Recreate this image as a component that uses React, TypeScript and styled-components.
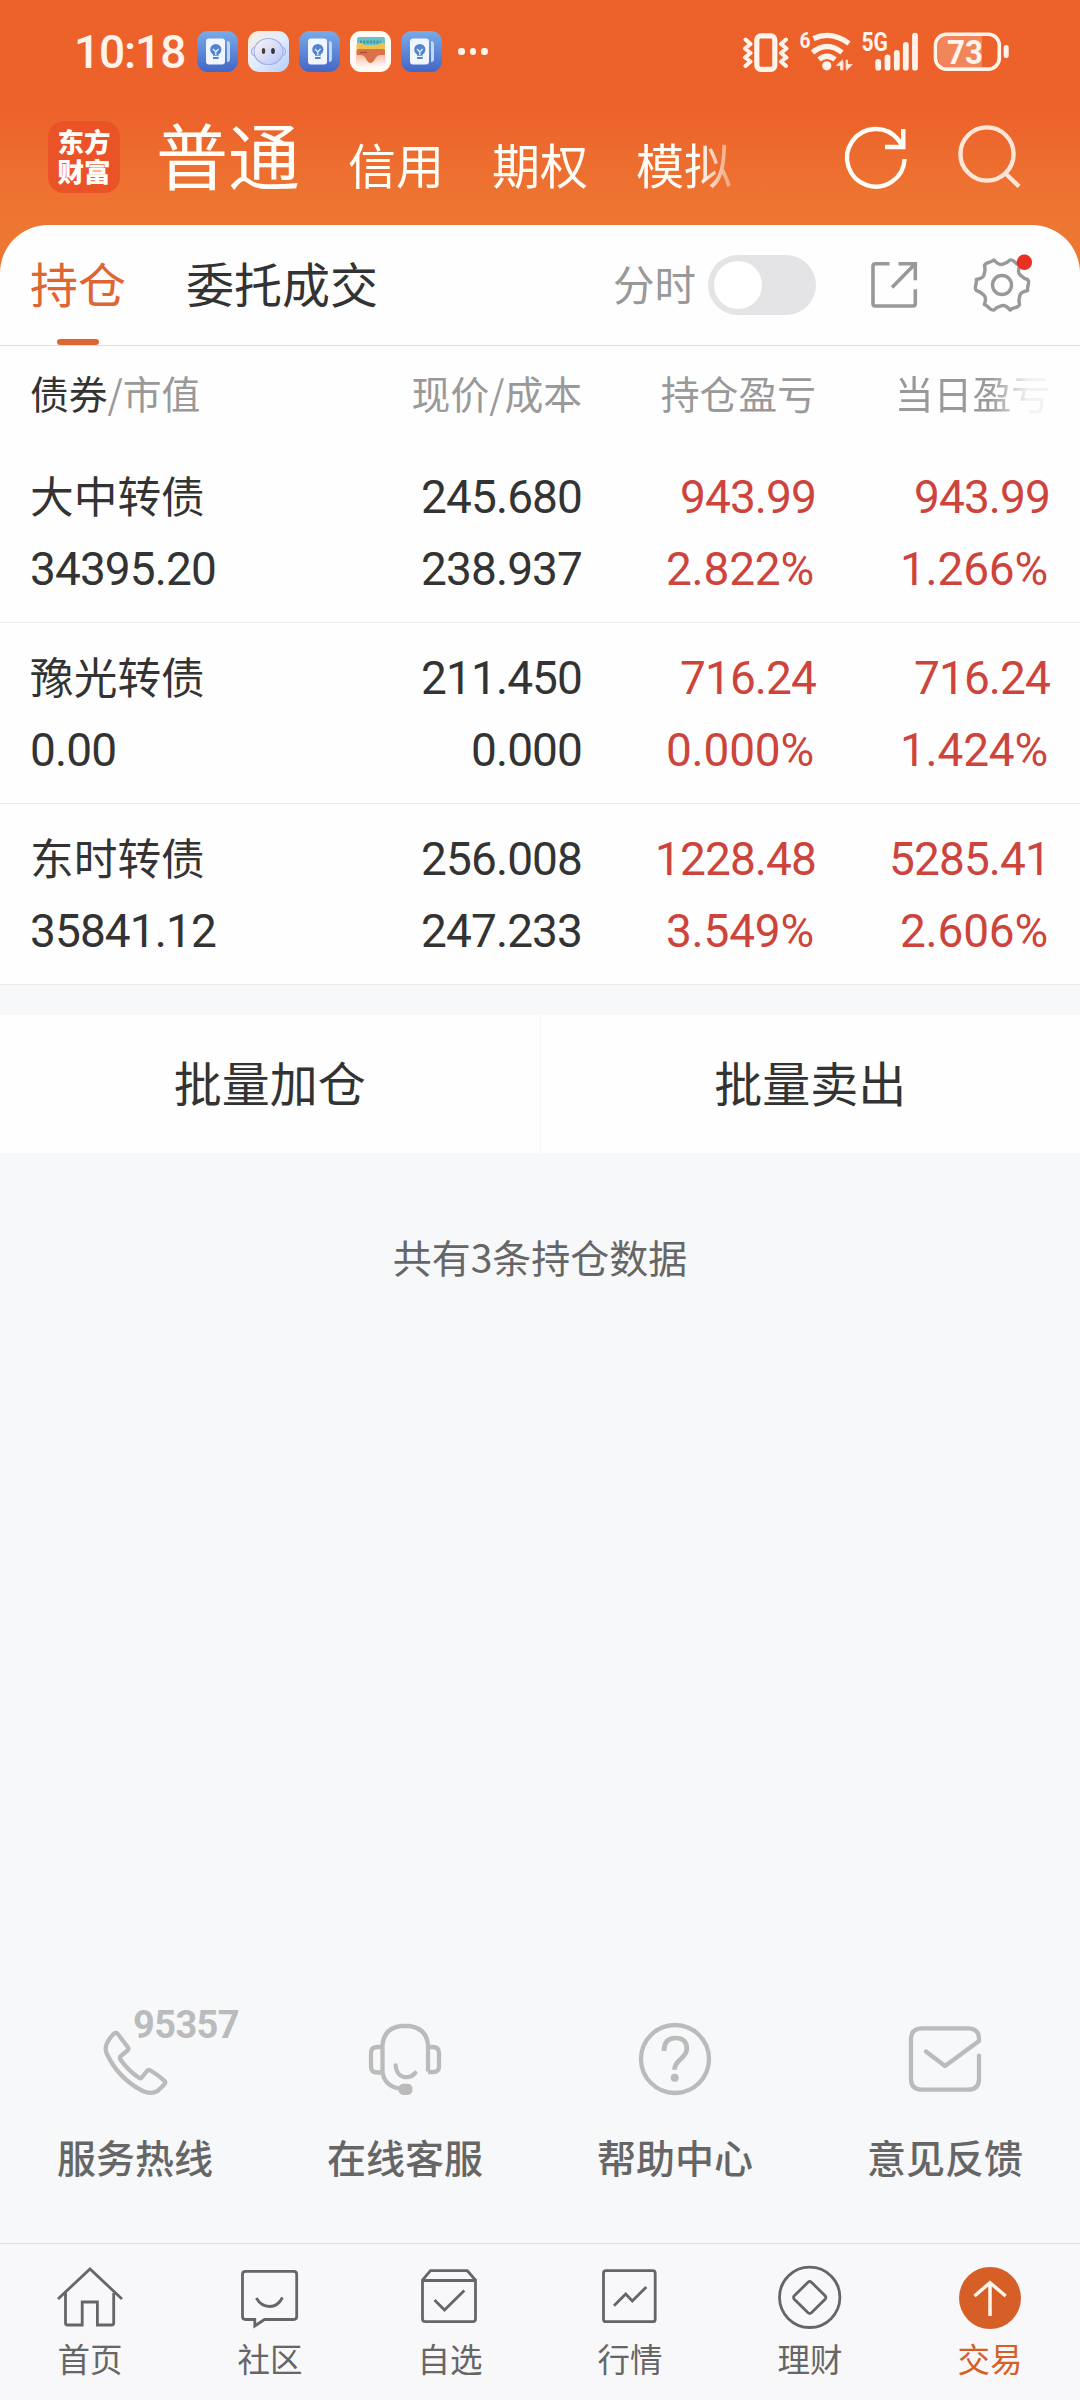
import React from 'react';
import styled, { createGlobalStyle, css } from 'styled-components';

const cjk = `"Noto Sans CJK SC", "Noto Sans", sans-serif`;
const digits = `Roboto, "Noto Sans CJK SC", sans-serif`;

const Global = createGlobalStyle`
  * { box-sizing: border-box; }
  body { margin: 0; background: #f7f8fa; font-family: ${cjk}; }
`;

const Page = styled.div`
  width: 1080px;
  height: 2400px;
  display: flex;
  flex-direction: column;
  background: #f7f8fa;
  color: #333;
  overflow: hidden;
  white-space: nowrap;
`;

const Header = styled.header`
  height: 273px;
  margin-bottom: -48px;
  flex: none;
  background: linear-gradient(#ed622b 0, #ec612a 108px, #ed6f30 170px, #ee7633 225px);
  color: #fffdf8;
`;

const StatusBar = styled.div`
  height: 103px;
  padding: 0 70px 0 74px;
  display: flex;
  align-items: center;
  color: #fff3ec;
`;

const Clock = styled.span`
  width: 123px;
  font: 500 46px/46px ${digits};
  letter-spacing: -1.1px;
`;

const AppIcons = styled.div`
  display: flex;
  gap: 10px;
  svg { display: block; }
`;

const Dots = styled.div`
  display: flex;
  gap: 5px;
  margin-left: 16px;
  i { width: 6.5px; height: 6.5px; border-radius: 50%; background: currentColor; }
`;

const StatusRight = styled.div`
  margin-left: auto;
  display: flex;
  svg { display: block; }
`;

const TitleBar = styled.div`
  height: 122px;
  padding: 0 56px 0 48px;
  display: flex;
`;

const Logo = styled.div`
  width: 72px;
  height: 72px;
  margin-top: 18px;
  padding-top: 5px;
  border-radius: 16px;
  background: #ea5228;
  text-align: center;
  font: 800 26.5px/30px ${cjk};
`;

const Accounts = styled.nav`
  display: flex;
  align-items: baseline;
  gap: 48px;
  margin-left: 36px;
  height: 112px;
  padding-top: 1px;
  mask-image: linear-gradient(90deg, #000 542px, rgba(0, 0, 0, 0.35) 576px);
`;

const Account = styled.span<{ $active?: boolean }>`
  font-size: ${(p) => (p.$active ? 72 : 48)}px;
  line-height: 98px;
`;

const HeaderIcons = styled.div`
  margin-left: auto;
  display: flex;
  gap: 40px;
  padding-top: 19px;
`;

const Card = styled.section`
  background: #fefefe;
  border-radius: 48px 48px 0 0;
  flex: none;
`;

const Tabs = styled.div`
  height: 121px;
  padding: 0 46px 0 30px;
  border-bottom: 1px solid #dedede;
  display: flex;
`;

const Tab = styled.div<{ $active?: boolean }>`
  height: 120px;
  margin-right: 60px;
  font-size: 48px;
  line-height: 114px;
  display: flex;
  flex-direction: column;
  align-items: center;
  ${(p) => p.$active && css`
    color: #dd6633;
    &::after {
      content: '';
      flex: none;
      width: 42px;
      height: 6px;
      border-radius: 3px;
      background: #dd6633;
    }
  `}
`;

const Tools = styled.div`
  margin-left: auto;
  height: 120px;
  display: flex;
  align-items: center;
`;

const ToolLabel = styled.span`
  font-size: 41.5px;
  line-height: 60px;
  padding-bottom: 5px;
  color: #999;
`;

const Toggle = styled.div`
  width: 108px;
  height: 60px;
  margin: 0 52px 0 12px;
  padding: 6px;
  border-radius: 30px;
  background: #e4e4e6;
  &::before {
    content: '';
    display: block;
    width: 48px;
    height: 48px;
    border-radius: 50%;
    background: #fff;
  }
`;

const SettingsWrap = styled.span`
  display: flex;
  margin-left: 50px;
`;

const GridRow = styled.div`
  display: grid;
  grid-template-columns: 252px 300px 234px 234px;
  padding: 0 30px;
`;

const HeadRow = styled(GridRow)`
  height: 96px;
  font-size: 38.8px;
  line-height: 92px;
  color: #999;
  b { font-weight: 400; color: #333; }
`;

const HeadCell = styled.span<{ $fade?: boolean }>`
  text-align: right;
  &:first-child { text-align: left; }
  ${(p) => p.$fade && css`
    mask-image: linear-gradient(90deg, #000 174px, rgba(0, 0, 0, 0.12) 212px);
  `}
`;

const HoldingRow = styled(GridRow)`
  height: 181px;
  padding-top: 19px;
  border-bottom: 1px solid #ebebeb;
`;

const Cell = styled.div<{ $up?: boolean }>`
  display: flex;
  flex-direction: column;
  align-items: flex-end;
  font: 400 46px/72px ${digits};
  letter-spacing: -0.9px;
  color: ${(p) => (p.$up ? '#cd443c' : '#333')};
  &:first-child { align-items: flex-start; }
`;

const Percent = styled.span`
  letter-spacing: -0.2px;
  padding-right: 2px;
`;

const BondName = styled.span`
  font: 400 43.7px/66px ${cjk};
  letter-spacing: 0;
  margin-bottom: 6px;
`;

const Actions = styled.div`
  margin-top: 30px;
  display: flex;
  background: #fefefe;
  flex: none;
`;

const Action = styled.button`
  flex: 1;
  height: 138px;
  border: 0;
  padding: 0 0 6px;
  background: none;
  font: 400 48px/132px ${cjk};
  color: #333;
  & + & { border-left: 1px solid #f5f5f6; }
`;

const Summary = styled.p`
  margin: 0;
  text-align: center;
  font-size: 39px;
  line-height: 206px;
  color: #666;
`;

const Services = styled.div`
  margin-top: auto;
  display: grid;
  grid-template-columns: repeat(4, 1fr);
  padding-bottom: 62px;
`;

const Service = styled.div`
  position: relative;
  display: flex;
  flex-direction: column;
  align-items: center;
  font-weight: 500;
  font-size: 39px;
  line-height: 50px;
  color: #666;
  svg { display: block; margin-bottom: 31px; }
`;

const HotlineBadge = styled.span`
  position: absolute;
  left: 133px;
  top: -5px;
  font: 700 38px/40px ${digits};
  letter-spacing: -0.6px;
  color: #bbb;
`;

const BottomNav = styled.nav`
  height: 157px;
  flex: none;
  border-top: 1px solid #e1e1e4;
  background: #f8f8fa;
  display: grid;
  grid-template-columns: repeat(6, 1fr);
  padding-top: 20px;
`;

const NavItem = styled.div<{ $active?: boolean }>`
  display: flex;
  flex-direction: column;
  align-items: center;
  font-size: 32.5px;
  line-height: 40px;
  color: ${(p) => (p.$active ? '#d65f27' : '#666')};
  svg { display: block; margin-bottom: 8px; }
`;

const NoteApp = () => (
  <svg width="41" height="41" viewBox="0 0 41 41">
    <defs>
      <linearGradient id="note" x2="0" y2="1"><stop stopColor="#79abea" /><stop offset="1" stopColor="#4366c6" /></linearGradient>
    </defs>
    <rect width="41" height="41" rx="11" fill="url(#note)" />
    <path d="M30 10q3 0 3 3v15q0 3-3 3z" fill="#c3d6f6" />
    <rect x="9" y="7.500" width="19" height="26" rx="3" fill="#f1f6fe" />
    <circle cx="18.800" cy="18.500" r="5.600" fill="#5583d0" />
    <path d="M16 22h5.600v6h-5.600z" fill="#5583d0" />
    <path d="M16 18l2.800 2.800 2.800-2.800M18.800 21v3M16 25.300h5.600" stroke="#f1f6fe" strokeWidth="1.200" fill="none" />
  </svg>
);

const FaceApp = () => (
  <svg width="41" height="41" viewBox="0 0 41 41">
    <defs>
      <linearGradient id="faceBg" x2="1" y2="1"><stop stopColor="#fdeedd" /><stop offset=".5" stopColor="#e0edfb" /><stop offset="1" stopColor="#b5cdfb" /></linearGradient>
      <linearGradient id="face" x2="1" y2="1"><stop stopColor="#fbf6f3" /><stop offset="1" stopColor="#b6c6fb" /></linearGradient>
    </defs>
    <rect width="41" height="41" rx="11" fill="url(#faceBg)" />
    <path d="M7 16q-3.500 1-3.500 4.500T7 25M34 16q3.500 1 3.500 4.500T34 25" fill="none" stroke="#a6b1ea" strokeWidth="1.200" />
    <ellipse cx="20.500" cy="20.500" rx="14.500" ry="13" fill="url(#face)" stroke="#a3b0e8" strokeWidth="1.200" />
    <ellipse cx="15.500" cy="20" rx="1.700" ry="3" fill="#4b3d3a" />
    <ellipse cx="25" cy="20" rx="1.900" ry="3" fill="#353443" />
  </svg>
);

const WalletApp = () => (
  <svg width="41" height="41" viewBox="0 0 41 41">
    <defs>
      <linearGradient id="wallet" x2="0" y2="1"><stop stopColor="#f6bda9" /><stop offset="1" stopColor="#fffaf6" /></linearGradient>
    </defs>
    <rect width="41" height="41" rx="11" fill="#fffaf5" />
    <rect x="7" y="6" width="28" height="14" rx="2" fill="#6cc0c6" />
    <path d="M10 11h21" stroke="#3f979f" strokeWidth="3" strokeDasharray="2 1.300" />
    <path d="M6.500 14q0-2 2-2h3q2 2 4 2h11q2 0 4-2h2q2.500 0 2.500 2v8h-28.500z" fill="#f0c04f" />
    <path d="M6.500 20q0-2 2-2h24.500q2 0 2 2v14h-28.500z" fill="#dc7048" />
    <path d="M10 21.500h7" stroke="#a94a33" strokeWidth="1.200" />
    <path d="M6 24h5q3 0 5 4 4.500 8 9 0 2-4 5-4h5.500v10q0 2-2 2h-25.500q-2 0-2-2z" fill="url(#wallet)" />
  </svg>
);

/* Vibrate, Wi-Fi 6, 5G signal and battery, drawn on one 270x72 strip. */
const StatusIcons = () => (
  <svg width="270" height="72" viewBox="740 15 270 72" fill="none" stroke="#fff3ec" strokeLinecap="round" strokeLinejoin="round">
    <rect x="756.800" y="34.800" width="18" height="33.500" rx="4" strokeWidth="5.200" />
    <path d="M745.500 38.500l5 4.500-5.500 4.500 5.500 4.500-5.500 4.500 5.500 4-5 4.500M786 38.500l-5 4.500 5.500 4.500-5.500 4.500 5.500 4.500-5.500 4 5 4.500" strokeWidth="4" />
    <g strokeWidth="5.200" strokeLinecap="butt">
      <path d="M813.500 37.500q18-8 35.500 5" />
      <path d="M812.500 51.500q14.500-12 29.500 0" />
      <path d="M819 58.500q8-6.500 16 0" />
    </g>
    <circle cx="826.800" cy="64.800" r="4.600" fill="#fff3ec" stroke="none" />
    <path d="M842.500 59v10h-2v-4.500h-4zM846.500 69v-10h1v4.500h4.500zM843.300 61v8M846 59v8" fill="#fff3ec" strokeWidth=".6" />
    <g fill="#fff3ec" stroke="none" fontFamily="Roboto, sans-serif" fontWeight="700">
      <text x="799.500" y="46.500" fontSize="22" textLength="11" lengthAdjust="spacingAndGlyphs">6</text>
      <text x="861.500" y="50.300" fontSize="25" textLength="26.500" lengthAdjust="spacingAndGlyphs">5G</text>
      <text x="947" y="62.700" fontSize="34" textLength="36" lengthAdjust="spacingAndGlyphs">73</text>
    </g>
    <path d="M878.200 61v5.700M887.500 56.500v10.200M896.800 52v14.700M905.800 44v22.700M915 34.700v32" strokeWidth="5.800" />
    <path d="M948 35h34v31h-34q-10 0-10-10v-11q0-10 10-10z" fill="#fff3ec" fillOpacity=".25" stroke="none" />
    <rect x="935.500" y="33.300" width="63.800" height="34.800" rx="11" strokeWidth="3.600" />
    <rect x="1003.700" y="44" width="5" height="13" rx="2.500" fill="#fff3ec" stroke="none" />
  </svg>
);

const RefreshIcon = () => (
  <svg width="72" height="72" viewBox="840 122 72 72" fill="none" stroke="#fffdf8" strokeWidth="4.400">
    <path d="M904.600 159a28.800 28.800 0 1 1-6.500-19.500L903.300 147" />
    <path d="M903.300 129v18H885" />
  </svg>
);

const SearchIcon = () => (
  <svg width="72" height="72" viewBox="952 122 72 72" fill="none" stroke="#ffe6d8" strokeWidth="4.400">
    <circle cx="987" cy="154" r="26.600" />
    <path d="M1005 173l14 13.500" />
  </svg>
);

const ShareIcon = () => (
  <svg width="52" height="52" viewBox="868 259 52 52" fill="none" stroke="#999" strokeWidth="3.600">
    <path d="M889.500 263.800h-14q-2.500 0-2.500 2.500v37.200q0 2.500 2.500 2.500h37.300q2.500 0 2.500-2.500v-14.200M898.500 263.800h16.800v16.500M892 287.500l22.500-23" />
  </svg>
);

const polar = (r: number, deg: number) => {
  const a = (deg * Math.PI) / 180;
  return `${(r * Math.cos(a)).toFixed(2)} ${(r * Math.sin(a)).toFixed(2)}`;
};

const gearPath = `M${polar(26.3, -12)}` + [0, 60, 120, 180, 240, 300]
  .map((t) => `Q${polar(27.5, t - 8)} ${polar(26.2, t)}T${polar(26.3, t + 12)}C${polar(22, t + 17)} ${polar(20, t + 24)} ${polar(20.700, t + 30)}S${polar(22, t + 43)} ${polar(26.3, t + 48)}`)
  .join('') + 'Z';

const SettingsIcon = () => (
  <svg width="64" height="64" viewBox="-32 -32 64 64" fill="none" stroke="#999" strokeWidth="3.400" strokeLinejoin="round">
    <path d={gearPath} />
    <circle r="9.500" />
    <circle cx="22.400" cy="-22.700" r="7.700" fill="#e63223" stroke="none" />
  </svg>
);

const serviceIcons = {
  phone: <path d="M28 24.500q2.700-3.500 5.200 0l9.500 12.500q1.500 2-.3 3.500l-6.600 5.700q-1.500 1.300-.4 3.300 7.600 11 18.600 18.300 1.500 1 2.700-.3l5.300-6.500q1.500-1.700 3.500-.5 7 4 13.800 10.200 2 1.700 0 3.700-3.300 3.600-6.600 6.400-6.500 4-15 .2-25-13-36.200-38-2-5.500.8-10.500 2-4 5.700-8z" />,
  headset: (
    <>
      <path d="M73 61.500V35q-1.500-17-19-19h-8q-17 2-18.500 19v27q2 14.500 18 16.700M27.500 37h-5q-6.500 0-6.500 6v13.500q0 6 6.500 6h5M73 37h4.500q6.500 0 6.500 6v13.500q0 5.500-6 5.500h-5" />
      <path d="M40.700 55.500q.5 9.500 8 11.500 7 1.200 11.600-4.200" strokeLinecap="round" />
      <rect x="43.500" y="73.700" width="14" height="11.300" rx="5" fill="#bbb" stroke="none" />
    </>
  ),
  help: (
    <>
      <circle cx="50" cy="49" r="34" />
      <path d="M39 41q0-13 11.500-13t11.300 11q0 4-4.300 8.200l-4 4q-4 4-4 8.600" strokeWidth="4.700" />
      <circle cx="49.700" cy="67.700" r="4" fill="#bbb" stroke="none" />
    </>
  ),
  mail: <path d="M31 41.500L50 56l34-25v-2q0-10.700-11-10.700H27q-11 0-11 11v39.400q0 11 11 11h46q11 0 11-11V45.700" strokeLinecap="round" />,
};

const navIcons = {
  home: <path d="M4 35L36 5l32 30M11.500 29v30q0 2 2 2h14.700V38h15.200v23h14.300q2 0 2-2V29" />,
  chat: (
    <>
      <path d="M11.500 7.300h48.200q3 0 3 3v42.200q0 3-3 3H30.500L20.800 62v-6.500h-9.300q-3 0-3-3V10.300q0-3 3-3z" />
      <path d="M22.300 34q5 8.500 13.300 8.500T48.500 33.500" />
    </>
  ),
  check: (
    <>
      <path d="M16.500 6.700h36.800l8.200 9.300v38.700q0 3-3 3h-47q-3 0-3-3V16zM9 16.500h52" />
      <path d="M20.500 36L30.500 46 50.300 26.500" />
    </>
  ),
  chart: (
    <>
      <rect x="9.500" y="6.700" width="51.700" height="51" rx="2.500" />
      <path d="M20 41.700L31.700 30l6.600 7L52.300 23" />
    </>
  ),
  wealth: (
    <>
      <circle cx="35.700" cy="33.300" r="30.200" />
      <path d="M34 18.200q1.700-1.500 3.400 0l13.700 13.600q1.500 1.700 0 3.400L37.400 48.800q-1.700 1.500-3.400 0L20.300 35.200q-1.500-1.700 0-3.400z" />
    </>
  ),
  trade: (
    <>
      <circle cx="36" cy="34" r="31" fill="#d65f27" stroke="none" />
      <path d="M36 52V19.500M20.500 32L36 18.700 51.700 32" stroke="#fff6ec" strokeWidth="3.500" />
    </>
  ),
};

const holdings = [
  { name: '大中转债', value: '34395.20', price: '245.680', cost: '238.937', pnl: '943.99', pnlPct: '2.822%', day: '943.99', dayPct: '1.266%' },
  { name: '豫光转债', value: '0.00', price: '211.450', cost: '0.000', pnl: '716.24', pnlPct: '0.000%', day: '716.24', dayPct: '1.424%' },
  { name: '东时转债', value: '35841.12', price: '256.008', cost: '247.233', pnl: '1228.48', pnlPct: '3.549%', day: '5285.41', dayPct: '2.606%' },
];

const services: { label: string; icon: keyof typeof serviceIcons; badge?: string }[] = [
  { label: '服务热线', icon: 'phone', badge: '95357' },
  { label: '在线客服', icon: 'headset' },
  { label: '帮助中心', icon: 'help' },
  { label: '意见反馈', icon: 'mail' },
];

const navItems: { label: string; icon: keyof typeof navIcons; active?: boolean }[] = [
  { label: '首页', icon: 'home' },
  { label: '社区', icon: 'chat' },
  { label: '自选', icon: 'check' },
  { label: '行情', icon: 'chart' },
  { label: '理财', icon: 'wealth' },
  { label: '交易', icon: 'trade', active: true },
];

export default function App() {
  return (
    <>
      <Global />
      <Page>
        <Header>
          <StatusBar>
            <Clock>10:18</Clock>
            <AppIcons><NoteApp /><FaceApp /><NoteApp /><WalletApp /><NoteApp /></AppIcons>
            <Dots><i /><i /><i /></Dots>
            <StatusRight><StatusIcons /></StatusRight>
          </StatusBar>
          <TitleBar>
            <Logo>东方<br />财富</Logo>
            <Accounts>
              <Account $active>普通</Account>
              <Account>信用</Account>
              <Account>期权</Account>
              <Account>模拟</Account>
            </Accounts>
            <HeaderIcons><RefreshIcon /><SearchIcon /></HeaderIcons>
          </TitleBar>
        </Header>

        <Card>
          <Tabs>
            <Tab $active>持仓</Tab>
            <Tab>委托成交</Tab>
            <Tools>
              <ToolLabel>分时</ToolLabel>
              <Toggle />
              <ShareIcon />
              <SettingsWrap><SettingsIcon /></SettingsWrap>
            </Tools>
          </Tabs>
          <HeadRow>
            <HeadCell><b>债券</b>/市值</HeadCell>
            <HeadCell>现价/成本</HeadCell>
            <HeadCell>持仓盈亏</HeadCell>
            <HeadCell $fade>当日盈亏</HeadCell>
          </HeadRow>
          {holdings.map((h) => (
            <HoldingRow key={h.name}>
              <Cell><BondName>{h.name}</BondName><span>{h.value}</span></Cell>
              <Cell><span>{h.price}</span><span>{h.cost}</span></Cell>
              <Cell $up><span>{h.pnl}</span><Percent>{h.pnlPct}</Percent></Cell>
              <Cell $up><span>{h.day}</span><Percent>{h.dayPct}</Percent></Cell>
            </HoldingRow>
          ))}
        </Card>

        <Actions>
          <Action>批量加仓</Action>
          <Action>批量卖出</Action>
        </Actions>
        <Summary>共有3条持仓数据</Summary>

        <Services>
          {services.map((s) => (
            <Service key={s.label}>
              <svg width="100" height="90" viewBox="0 0 100 90" fill="none" stroke="#bbb" strokeWidth="4.300" strokeLinejoin="round">{serviceIcons[s.icon]}</svg>
              {s.badge && <HotlineBadge>{s.badge}</HotlineBadge>}
              <span>{s.label}</span>
            </Service>
          ))}
        </Services>

        <BottomNav>
          {navItems.map((n) => (
            <NavItem key={n.label} $active={n.active}>
              <svg width="72" height="66" viewBox="0 0 72 66" fill="none" stroke="#666" strokeWidth="2.800">{navIcons[n.icon]}</svg>
              <span>{n.label}</span>
            </NavItem>
          ))}
        </BottomNav>
      </Page>
    </>
  );
}
